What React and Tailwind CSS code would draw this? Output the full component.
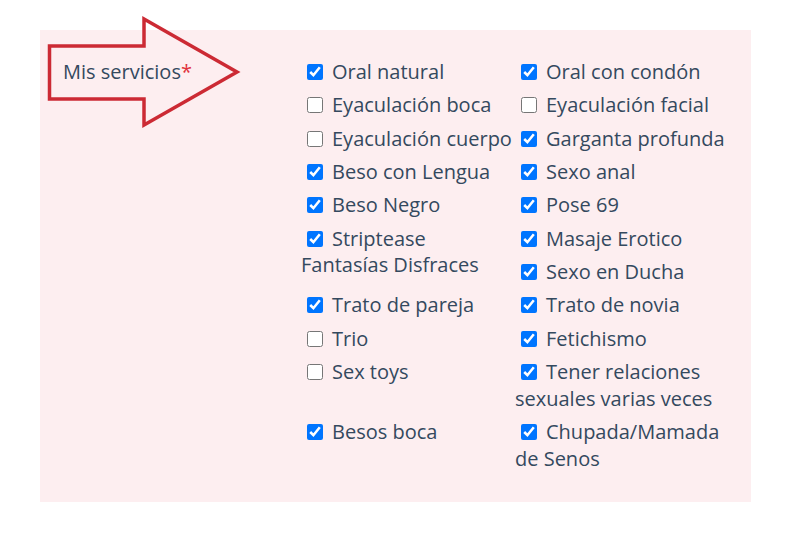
const services = [
  { label: "Oral natural", checked: true },
  { label: "Oral con condón", checked: true },
  { label: "Eyaculación boca", checked: false },
  { label: "Eyaculación facial", checked: false },
  { label: "Eyaculación cuerpo", checked: false },
  { label: "Garganta profunda", checked: true },
  { label: "Beso con Lengua", checked: true },
  { label: "Sexo anal", checked: true },
  { label: "Beso Negro", checked: true },
  { label: "Pose 69", checked: true },
  { label: "Striptease Fantasías Disfraces", checked: true },
  { label: "Masaje Erotico", checked: true },
  { label: "Sexo en Ducha", checked: true },
  { label: "Trato de pareja", checked: true },
  { label: "Trato de novia", checked: true },
  { label: "Trio", checked: false },
  { label: "Fetichismo", checked: true },
  { label: "Sex toys", checked: false },
  { label: "Tener relaciones sexuales varias veces", checked: true },
  { label: "Besos boca", checked: true },
  { label: "Chupada/Mamada de Senos", checked: true },
];

function Arrow() {
  return (
    <svg
      className="absolute left-0 top-0 pointer-events-none"
      width="260"
      height="140"
      viewBox="0 0 260 140"
    >
      <polygon
        points="49.5,46 144,46 144,19 237,72 144,125 144,99 49.5,99"
        fill="none"
        stroke="#cc2a34"
        strokeWidth="3.5"
      />
    </svg>
  );
}

export default function App() {
  return (
    <div className="relative min-h-screen bg-white font-['Open_Sans',sans-serif] text-[#34495e]">
      <div className="pt-[30px] pl-[40px]">
        <div className="flex w-[711px] h-[472px] bg-[#fdeef0] pl-[23px] pt-[29px]">
          {/* Label */}
          <div className="w-[238px] shrink-0 text-[20px] leading-[26.67px]">
            Mis servicios<span className="text-[#e0323c]">*</span>
          </div>

          {/* Checkboxes */}
          <div className="w-[428px] text-[20px] leading-[26.67px]">
            {services.map((s) => (
              <label key={s.label} className="float-left w-1/2 mb-[6.67px]">
                <input
                  type="checkbox"
                  defaultChecked={s.checked}
                  className="w-[16px] h-[16px] ml-[6px] mr-[9px] align-[-1px] accent-[#0075ff]"
                />
                {s.label}
              </label>
            ))}
          </div>
        </div>
      </div>
      <Arrow />
    </div>
  );
}
